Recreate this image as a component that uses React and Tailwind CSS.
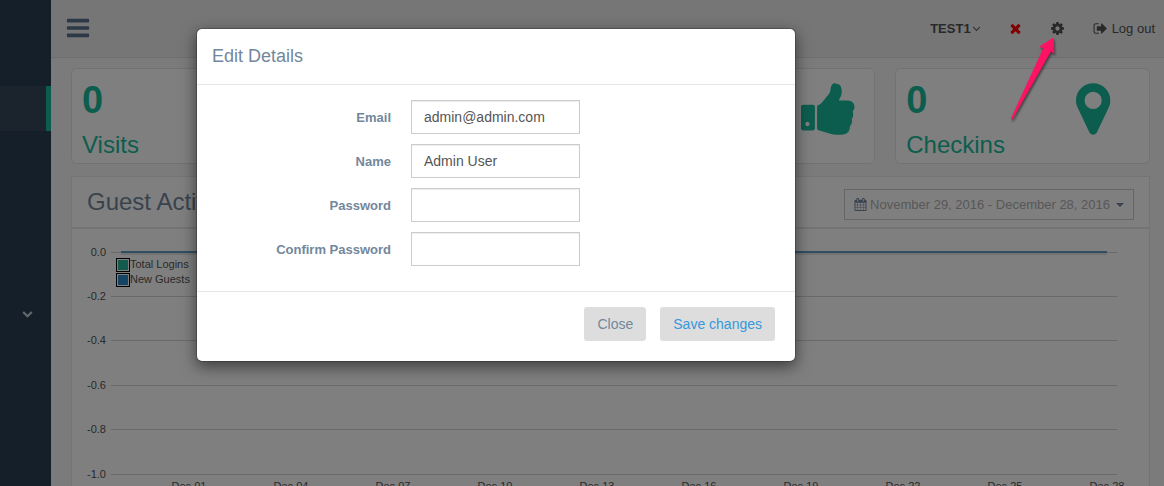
const ICONS = {
  bars: "M1664 1344v128q0 26-19 45t-45 19h-1408q-26 0-45-19t-19-45v-128q0-26 19-45t45-19h1408q26 0 45 19t19 45zm0-512v128q0 26-19 45t-45 19h-1408q-26 0-45-19t-19-45v-128q0-26 19-45t45-19h1408q26 0 45 19t19 45zm0-512v128q0 26-19 45t-45 19h-1408q-26 0-45-19t-19-45v-128q0-26 19-45t45-19h1408q26 0 45 19t19 45z",
  thumbsUp: "M320 1344q0-26-19-45t-45-19q-27 0-45.5 19t-18.5 45q0 27 18.5 45.5t45.5 18.5q26 0 45-18.5t19-45.5zm160-512v640q0 26-19 45t-45 19h-288q-26 0-45-19t-19-45v-640q0-26 19-45t45-19h288q26 0 45 19t19 45zm1184 0q0 86-55 149 15 44 15 76 3 76-43 137 17 56 0 117-15 57-54 94 9 112-49 181-64 76-197 78h-129q-66 0-144-15.5t-121.5-29-120.5-39.5q-123-43-158-44-26-1-45-19.5t-19-44.5v-641q0-25 18-43.5t43-20.5q24-2 76-59t101-121q68-87 101-120 18-18 31-48t17.5-48.5 13.5-60.5q7-39 12.5-61t19.5-52 34-50q19-19 45-19 46 0 82.5 10.5t60 26 40 40.5 24 45 12 50 5 45 .5 39q0 38-9.5 76t-19 60-27.5 56q-3 6-10 18t-11 22-8 24h277q78 0 135 57t57 135z",
  marker: "M1152 640q0-106-75-181t-181-75-181 75-75 181 75 181 181 75 181-75 75-181zm256 0q0 109-33 179l-364 774q-16 33-47.5 52t-67.5 19-67.5-19-46.5-52l-365-774q-33-70-33-179 0-212 150-362t362-150 362 150 150 362z",
  cog: "M1152 896q0-106-75-181t-181-75-181 75-75 181 75 181 181 75 181-75 75-181zm512-109v222q0 12-8 23t-20 13l-185 28q-19 54-39 91 35 50 107 138 10 12 10 25t-9 23q-27 37-99 108t-94 71q-12 0-26-9l-138-108q-44 23-91 38-16 136-29 186-7 28-36 28h-222q-14 0-24.5-8.5t-11.5-21.5l-28-184q-49-16-90-37l-141 107q-10 9-25 9-14 0-25-11-126-114-165-168-7-10-7-23 0-12 8-23 15-21 51-66.5t54-70.5q-27-50-41-99l-183-27q-13-2-21-12.5t-8-23.5v-222q0-12 8-23t19-13l186-28q14-46 39-92-40-57-107-138-10-12-10-24 0-10 9-23 26-36 98.5-107.5t94.5-71.5q13 0 26 10l138 107q44-23 91-38 16-136 29-186 7-28 36-28h222q14 0 24.5 8.5t11.5 21.5l28 184q49 16 90 37l142-107q9-9 24-9 13 0 25 10 129 119 165 170 7 8 7 22 0 12-8 23-15 21-51 66.5t-54 70.5q26 50 41 98l183 28q13 2 21 12.5t8 23.5z",
  signOut: "M704 1440q0 4 1 20t.5 26.5-3 23.5-10 19.5-20.5 6.5h-320q-119 0-203.5-84.5t-84.5-203.5v-704q0-119 84.5-203.5t203.5-84.5h320q13 0 22.5 9.5t9.5 22.5q0 4 1 20t.5 26.5-3 23.5-10 19.5-20.5 6.5h-320q-66 0-113 47t-47 113v704q0 66 47 113t113 47h312l11.5 1 11.5 3 8 5.5 7 9 2 13.5zm928-544q0 26-19 45l-544 544q-19 19-45 19t-45-19-19-45v-288h-448q-26 0-45-19t-19-45v-384q0-26 19-45t45-19h448v-288q0-26 19-45t45-19 45 19l544 544q19 19 19 45z",
  close: "M1490 1322q0 40-28 68l-136 136q-28 28-68 28t-68-28l-294-294-294 294q-28 28-68 28t-68-28l-136-136q-28-28-28-68t28-68l294-294-294-294q-28-28-28-68t28-68l136-136q28-28 68-28t68 28l294 294 294-294q28-28 68-28t68 28l136 136q28 28 28 68t-28 68l-294 294 294 294q28 28 28 68z",
  calendar: "M192 1664h288v-288h-288v288zm352 0h320v-288h-320v288zm-352-352h288v-320h-288v320zm352 0h320v-320h-320v320zm-352-384h288v-288h-288v288zm736 736h320v-288h-320v288zm-384-736h320v-288h-320v288zm768 736h288v-288h-288v288zm-384-352h320v-320h-320v320zm-352-864v-288q0-13-9.5-22.5t-22.5-9.5h-64q-13 0-22.5 9.5t-9.5 22.5v288q0 13 9.5 22.5t22.5 9.5h64q13 0 22.5-9.5t9.5-22.5zm736 864h288v-320h-288v320zm-384-384h320v-288h-320v288zm384 0h288v-288h-288v288zm32-480v-288q0-13-9.5-22.5t-22.5-9.5h-64q-13 0-22.5 9.5t-9.5 22.5v288q0 13 9.5 22.5t22.5 9.5h64q13 0 22.5-9.5t9.5-22.5zm384-64v1280q0 52-38 90t-90 38h-1408q-52 0-90-38t-38-90v-1280q0-52 38-90t90-38h128v-96q0-66 47-113t113-47h64q66 0 113 47t47 113v96h384v-96q0-66 47-113t113-47h64q66 0 113 47t47 113v96h128q52 0 90 38t38 90z",
  angleDown: "M1395 736q0 13-10 23l-466 466q-10 10-23 10t-23-10l-466-466q-10-10-10-23t10-23l50-50q10-10 23-10t23 10l393 393 393-393q10-10 23-10t23 10l50 50q10 10 10 23z",
  chevronDown: "M1683 808l-742 741q-19 19-45 19t-45-19l-742-741q-19-19-19-45.5t19-45.5l166-165q19-19 45-19t45 19l531 531 531-531q19-19 45-19t45 19l166 165q19 19 19 45.5t-19 45.5z",
};

function Icon({ name, className, viewBox = "0 0 1792 1792" }) {
  return (
    <svg viewBox={viewBox} className={className} fill="currentColor" aria-hidden="true">
      <path d={ICONS[name]} />
    </svg>
  );
}

function Sidebar() {
  return (
    <nav className="w-[51px] shrink-0 bg-[#2a3f54] pt-[86px] text-[#c4cfda]">
      <a href="#home" aria-label="Dashboard" className="block h-[45px] border-r-[5px] border-[#1abb9c] bg-[#364658]" />
      <button aria-label="Expand section" className="mt-[172px] flex h-5 w-full items-center justify-center pl-[3px]">
        <Icon name="chevronDown" className="size-[11px]" />
      </button>
    </nav>
  );
}

function TopBar() {
  return (
    <header className="flex h-[58px] items-center justify-between border-b border-[#d9dee4] bg-[#ededed] pr-[9px] pl-[14px] text-[13px] text-[#515356]">
      <button aria-label="Toggle menu" className="pb-0.5 text-[#5a738e]">
        <Icon name="bars" className="size-[26px]" />
      </button>
      <div className="flex items-center">
        <button className="flex items-center font-bold">
          TEST1
          <Icon name="angleDown" className="-ml-px size-[13px]" />
        </button>
        <button aria-label="Remove" className="ml-[25px] text-[#ff0000]">
          <Icon name="close" className="size-[15px]" />
        </button>
        <button aria-label="Settings" className="ml-[27px]">
          <Icon name="cog" className="size-[15px]" />
        </button>
        <a href="#logout" className="ml-[28px] flex items-center gap-1">
          <Icon name="signOut" className="size-[15px]" />
          Log out
        </a>
      </div>
    </header>
  );
}

const TILES = [
  { id: 1, value: "0", label: "Visits" },
  { id: 2 },
  { id: 3, icon: "thumbsUp", viewBox: "64 0 1728 1792" },
  { id: 4, value: "0", label: "Checkins", icon: "marker", viewBox: "384 0 1408 1792" },
];

function Tile({ value, label, icon, viewBox }) {
  return (
    <section className="flex h-24 justify-between rounded-[5px] border border-[#e4e4e4] bg-white pl-[10px] text-[#1abb9c]">
      <div>
        {value && <div className="mt-[10px] text-[38px] leading-[42px] font-bold">{value}</div>}
        {label && <h3 className="mt-[10px] text-2xl leading-[28px]">{label}</h3>}
      </div>
      <div className="w-[73px] pt-[10px]">
        {icon && <Icon name={icon} viewBox={viewBox} className="h-[60px]" />}
      </div>
    </section>
  );
}

const CHART_WIDTH = 1077;
const pct = (x) => `${(x / CHART_WIDTH) * 100}%`;
const GRID = [
  ["0.0", 23],
  ["-0.2", 67],
  ["-0.4", 111],
  ["-0.6", 156],
  ["-0.8", 200],
  ["-1.0", 245],
];
const DATES = ["Dec 01", "Dec 04", "Dec 07", "Dec 10", "Dec 13", "Dec 16", "Dec 19", "Dec 22", "Dec 25", "Dec 28"];
const LEGEND = [
  ["Total Logins", "#26b99a"],
  ["New Guests", "#2886c8"],
];

function Chart() {
  return (
    <div className="relative">
      <svg className="block h-[275px] w-full text-[11px]" fill="#545454">
        {GRID.map(([label, y]) => (
          <g key={label}>
            <text x={pct(34)} y={y + 4} textAnchor="end">{label}</text>
            <line x1={pct(39)} x2={pct(1045)} y1={y + 0.5} y2={y + 0.5} stroke="#d5d5d5" />
          </g>
        ))}
        <line x1={pct(49)} x2={pct(1035)} y1="25" y2="25" stroke="#000" strokeOpacity="0.1" strokeWidth="2" />
        <line x1={pct(49)} x2={pct(1035)} y1="23" y2="23" stroke="#609ec4" strokeWidth="2" />
        {DATES.map((d, i) => (
          <text key={d} x={pct(117 + i * 102)} y="261" textAnchor="middle">{d}</text>
        ))}
      </svg>
      <ul className="absolute top-[28px] left-[44px] text-[11px] leading-[15px] text-[#545454]">
        {LEGEND.map(([label, color]) => (
          <li key={label} className="flex items-center">
            <span className="border border-black p-px">
              <span className="block size-[10px]" style={{ backgroundColor: color }} />
            </span>
            {label}
          </li>
        ))}
      </ul>
    </div>
  );
}

function ActivityPanel() {
  return (
    <section className="mt-3 border border-[#e6e9ed] bg-white">
      <div className="flex h-[52px] items-center justify-between border-b-2 border-[#e6e9ed] px-[15px]">
        <h2 className="text-2xl text-[#73879c]">Guest Activities</h2>
        <button className="mt-[5px] flex h-[31px] items-center border border-[#ccc] px-[9px] text-[13px] text-[#b0b0b0]">
          <Icon name="calendar" className="mr-[3px] size-[13px] text-[#73879c]" />
          November 29, 2016 - December 28, 2016
          <span className="ml-[6px] border-x-4 border-t-4 border-x-transparent border-t-[#73879c]" />
        </button>
      </div>
      <Chart />
    </section>
  );
}

const FIELDS = [
  { id: "email", label: "Email", type: "email", value: "admin@admin.com" },
  { id: "name", label: "Name", type: "text", value: "Admin User" },
  { id: "password", label: "Password", type: "password", value: "" },
  { id: "confirm", label: "Confirm Password", type: "password", value: "" },
];

function EditDialog() {
  return (
    <form
      role="dialog"
      aria-labelledby="dialog-title"
      className="mt-7 ml-[196px] w-full max-w-[600px] rounded-md border border-black/20 bg-white bg-clip-padding text-[#73879c] shadow-[0_5px_15px_rgba(0,0,0,0.5)]"
    >
      <div className="border-b border-[#e5e5e5] px-[15px] py-[14px]">
        <h4 id="dialog-title" className="text-lg leading-[27px]">Edit Details</h4>
      </div>
      <div className="flex flex-col gap-[10px] pt-[15px] pb-[25px]">
        {FIELDS.map((f) => (
          <div key={f.id} className="flex items-center gap-5">
            <label htmlFor={f.id} className="w-[194px] pt-0.5 text-right text-[13px] font-bold">{f.label}</label>
            <input
              id={f.id}
              type={f.type}
              defaultValue={f.value}
              className="h-[34px] w-[169px] border border-[#ccc] px-3 text-sm text-[#555] shadow-[inset_0_1px_1px_rgba(0,0,0,0.075)]"
            />
          </div>
        ))}
      </div>
      <div className="flex justify-end gap-[14px] border-t border-[#e5e5e5] px-5 pt-[15px] pb-5 text-sm">
        <button type="button" className="h-[34px] rounded-[3px] bg-[#ddd] px-[13px]">Close</button>
        <button type="submit" className="h-[34px] rounded-[3px] bg-[#ddd] px-[13px] text-[#3498db]">Save changes</button>
      </div>
    </form>
  );
}

function Pointer() {
  return (
    <svg
      className="pointer-events-none absolute top-[34px] right-[104px] h-[90px] w-[60px] drop-shadow-[1px_2px_1px_rgba(0,0,0,0.5)]"
      viewBox="1000 34 60 90"
      aria-hidden="true"
    >
      <path d="M1053.3 38L1039.8 46.6L1043.600 48.300L1011.200 118.500L1012.200 119.300L1050.800 51.200L1053.900 53.200Z" fill="#ff1164" stroke="#ff1164" strokeWidth="0.6" />
    </svg>
  );
}

export default function App() {
  return (
    <div className="relative h-screen overflow-hidden bg-[#f7f7f7] font-['Liberation_Sans',Arial,sans-serif]">
      <div className="flex min-h-full">
        <Sidebar />
        <div className="min-w-0 flex-1">
          <TopBar />
          <main className="pt-[10px] pr-[14px] pl-5">
            <div className="grid grid-cols-4 gap-5">
              {TILES.map((t) => (
                <Tile key={t.id} {...t} />
              ))}
            </div>
            <ActivityPanel />
          </main>
        </div>
      </div>
      <div className="absolute inset-0 flex items-start bg-black/50">
        <EditDialog />
      </div>
      <Pointer />
    </div>
  );
}
